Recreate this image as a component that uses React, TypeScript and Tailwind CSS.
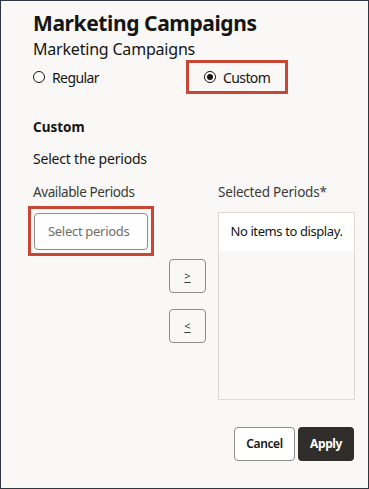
import React from "react";

const font = { fontFamily: '"Noto Sans", "Open Sans", Arial, sans-serif' };

function Radio({ checked, label }: { checked?: boolean; label: string }) {
  return (
    <label className="flex items-center gap-[7px] text-[14px] tracking-[-0.6px] text-[#161513]">
      <span className="flex h-[12px] w-[12px] items-center justify-center rounded-full border border-[#161513] bg-white">
        {checked && <span className="h-[6px] w-[6px] rounded-full bg-[#161513]" />}
      </span>
      {label}
    </label>
  );
}

function ArrowButton({ children }: { children: React.ReactNode }) {
  return (
    <button className="flex h-[34px] w-[37px] items-center justify-center rounded-[4px] border border-[#8f8d8a] text-[11px] text-[#3b3a38] underline underline-offset-2">
      {children}
    </button>
  );
}

export default function App() {
  return (
    <div
      className="box-border h-[489px] w-[369px] border border-[#2f3542] bg-[#f9f8f6] text-[#161513]"
      style={font}
    >
      <div className="pl-[32px] pr-[13px] pt-[6px]">
        {/* Header */}
        <h1 className="text-[21px] font-bold leading-[32px] tracking-[-0.4px]">Marketing Campaigns</h1>
        <div className="text-[16px] leading-[20px] tracking-[-0.2px]">Marketing Campaigns</div>

        {/* Type selection */}
        <div className="mt-[1px] flex h-[34px] items-center">
          <div className="w-[153px]">
            <Radio label="Regular" />
          </div>
          <div className="flex h-[34px] w-[102px] items-center border-[3px] border-[#c74634] pl-[15px]">
            <Radio checked label="Custom" />
          </div>
        </div>

        {/* Custom section */}
        <h2 className="mt-[23px] text-[13.5px] font-bold leading-[20px]">Custom</h2>
        <div className="mt-[12px] text-[14px] leading-[20px] tracking-[-0.2px]">Select the periods</div>

        {/* Shuttle */}
        <div className="mt-[13px] flex">
          <div className="w-[136px]">
            <div className="text-[13.5px] leading-[20px] tracking-[-0.4px] text-[#3b3a38]">Available Periods</div>
            <div className="-ml-[5px] mt-[4px] w-[126px] border-[3px] border-[#c74634] px-[3px] pb-[3px] pt-[4px]">
              <div className="flex h-[37px] items-center rounded-[4px] border border-[#8f8d8a] bg-white pl-[13px] text-[13px] tracking-[-0.3px] text-[#6f6d6a]">
                Select periods
              </div>
            </div>
          </div>
          <div className="mt-[77px] flex flex-col gap-[16px]">
            <ArrowButton>&gt;</ArrowButton>
            <ArrowButton>&lt;</ArrowButton>
          </div>
          <div className="ml-[12px] flex-1">
            <div className="text-[13.5px] leading-[20px] tracking-[-0.2px] text-[#3b3a38]">Selected Periods*</div>
            <div className="mt-[10px] h-[188px] border border-[#dcdad6]">
              <div className="flex h-[38px] items-center justify-center bg-white text-[13px] tracking-[-0.4px] text-[#161513]">
                No items to display.
              </div>
            </div>
          </div>
        </div>

        {/* Footer */}
        <div className="mt-[27px] flex justify-end gap-[3px] pr-[1px]">
          <button className="h-[34px] w-[61px] rounded-[4px] border border-[#8f8d8a] bg-white text-[12px] font-semibold tracking-[-0.4px] text-[#161513]">
            Cancel
          </button>
          <button className="h-[34px] w-[56px] rounded-[4px] bg-[#312d2a] text-[12px] font-bold tracking-[-0.4px] text-white">
            Apply
          </button>
        </div>
      </div>
    </div>
  );
}
